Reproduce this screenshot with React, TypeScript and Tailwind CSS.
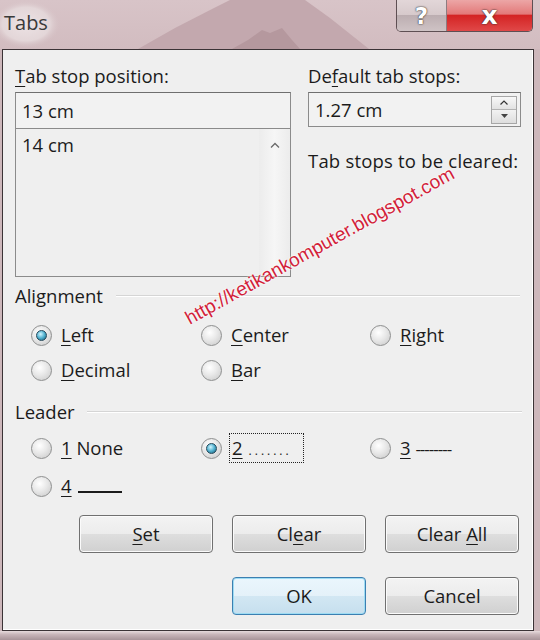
import React from "react";

function U({ children }: { children: React.ReactNode }) {
  return <span className="underline underline-offset-[3px] decoration-1">{children}</span>;
}

function Radio({ checked }: { checked?: boolean }) {
  return (
    <span className="w-[21px] h-[21px] shrink-0 rounded-full border border-[#8e8f8f] bg-[radial-gradient(circle_at_40%_35%,#ffffff,#e8e8e8_45%,#c6c6c6)] flex items-center justify-center">
      {checked && (
        <span className="w-[11px] h-[11px] rounded-full border border-[#24485a] bg-[radial-gradient(circle_at_40%_35%,#d2f6ff,#4fb0cf_50%,#17566e)]" />
      )}
    </span>
  );
}

function Opt({ checked, children }: { checked?: boolean; children: React.ReactNode }) {
  return (
    <div className="flex items-center gap-[9px] h-[22px]">
      <Radio checked={checked} />
      <span className="leading-[22px] whitespace-nowrap">{children}</span>
    </div>
  );
}

function Btn({ children, def }: { children: React.ReactNode; def?: boolean }) {
  return (
    <div
      className={
        def
          ? "w-[134px] h-[38px] rounded-[4px] border border-[#3c7fb1] bg-[linear-gradient(#eaf6fd,#e4f1f9_50%,#d2e7f3_50%,#c6dfee)] shadow-[inset_0_0_0_1px_#9edcf3] flex items-center justify-center"
          : "w-[134px] h-[38px] rounded-[4px] border border-[#707070] bg-[linear-gradient(#f3f3f3,#ececec_50%,#dedede_50%,#d0d0d0)] shadow-[inset_0_0_0_1px_#fbfbfb] flex items-center justify-center"
      }
    >
      <span className="leading-[22px]">{children}</span>
    </div>
  );
}

export default function App() {
  return (
    <div
      className="w-[540px] h-[640px] bg-[#cdb7bb] relative overflow-hidden text-[18.5px] text-[#1b1b1b]"
      style={{ fontFamily: '"Open Sans", "Noto Sans", sans-serif' }}
    >
      {/* title bar */}
      <div className="h-[49px] relative flex items-start bg-[linear-gradient(#d8c4c8,#d2bcc0)]">
        <svg className="absolute left-0 top-0" width="540" height="49" viewBox="0 0 540 49">
          <defs>
            <radialGradient id="glow" cx="0.5" cy="0.5" r="0.5">
              <stop offset="0" stopColor="#ece2e4" />
              <stop offset="0.7" stopColor="#e3d6d8" />
              <stop offset="1" stopColor="#d6c2c6" stopOpacity="0" />
            </radialGradient>
          </defs>
          <ellipse cx="26" cy="24" rx="34" ry="24" fill="url(#glow)" />
          <polygon points="138,49 175,28 214,8 230,0 305,0 330,18 369,49" fill="#c3a8ae" />
          <polygon points="232,49 248,40 262,30 270,33 282,28 292,40 300,49" fill="#b5989e" />
        </svg>
        <div className="relative pl-[4px] pt-[9px] text-[20px] leading-[28px] text-[#3a3a3a]">Tabs</div>
        <div className="relative ml-auto mr-[7px] flex h-[32px] rounded-b-[5px] border border-t-0 border-[#5e4f53] overflow-hidden">
          <div className="w-[50px] h-full bg-[linear-gradient(#e2d6d8,#d6c9cb_50%,#bcaeb1_50%,#cfc3c5)] flex items-center justify-center border-r border-[#8d7c80]">
            <span
              className="text-[23px] font-bold text-white leading-[28px] [text-shadow:0_0_2px_#333,0_0_1px_#333]"
              style={{ fontFamily: '"DejaVu Sans", sans-serif' }}
            >
              ?
            </span>
          </div>
          <div className="w-[85px] h-full bg-[linear-gradient(#eca6a6,#e37a7a_45%,#d42424_50%,#e04848)] flex items-center justify-center">
            <span
              className="text-[25px] font-bold text-white leading-[28px] [text-shadow:0_0_2px_#333,0_0_1px_#333]"
              style={{ fontFamily: '"DejaVu Sans", sans-serif' }}
            >
              x
            </span>
          </div>
        </div>
      </div>

      {/* panel */}
      <div className="ml-[2px] w-[532px] h-[582px] border border-[#3b3336] bg-[#efefef] shadow-[inset_-1px_-1px_0_#ffffff] flex flex-col">
        {/* top section */}
        <div className="flex pt-[15px]">
          <div className="ml-[12px] w-[276px] flex flex-col">
            <div className="h-[22px] leading-[22px] whitespace-nowrap">
              <U>T</U>ab stop position:
            </div>
            <div className="mt-[5px] h-[37px] border border-[#8b8b8b] border-t-[#6f6f6f] bg-[#f2f2f2] flex items-center pl-[6px]">
              <span className="leading-[22px]">13 cm</span>
            </div>
            <div className="h-[149px] -mt-px border border-[#8b8b8b] bg-[#efefef] flex">
              <div className="flex-1 pl-[6px] pt-[5px] leading-[22px]">14 cm</div>
              <div className="w-[31px] bg-[linear-gradient(90deg,#ececec,#f6f6f6,#ececec)] flex justify-center pt-[13px]">
                <svg width="10" height="6" viewBox="0 0 10 6">
                  <path d="M1 5.5 L5 1.5 L9 5.5" fill="none" stroke="#6a6a6a" strokeWidth="1.3" />
                </svg>
              </div>
            </div>
          </div>
          <div className="ml-[17px] w-[213px] flex flex-col">
            <div className="h-[22px] leading-[22px] whitespace-nowrap">
              De<U>f</U>ault tab stops:
            </div>
            <div className="mt-[5px] h-[35px] border border-[#8b8b8b] border-t-[#6f6f6f] bg-[#f2f2f2] flex items-center pl-[6px] pr-[3px]">
              <span className="flex-1 leading-[22px]">1.27 cm</span>
              <div className="w-[26px] h-[28px] flex flex-col border border-[#a7a7a7]">
                <div className="flex-1 bg-[linear-gradient(#f8f8f8,#e2e2e2)] border-b border-[#b3b3b3] flex items-center justify-center">
                  <svg width="8" height="5" viewBox="0 0 8 5">
                    <path d="M0.5 4.5 L4 1 L7.5 4.5" fill="none" stroke="#333" strokeWidth="1.2" />
                  </svg>
                </div>
                <div className="flex-1 bg-[linear-gradient(#f2f2f2,#dedede)] flex items-center justify-center">
                  <svg width="7" height="4" viewBox="0 0 7 4">
                    <path d="M0 0 L7 0 L3.5 4 Z" fill="#444" />
                  </svg>
                </div>
              </div>
            </div>
            <div className="mt-[23px] h-[22px] leading-[22px] whitespace-nowrap tracking-[0.2px]">Tab stops to be cleared:</div>
          </div>
        </div>

        {/* Alignment */}
        <div className="mt-[8px] ml-[12px] mr-[13px] h-[22px] flex items-center">
          <span className="leading-[22px]">Alignment</span>
          <div className="flex-1 ml-[13px] h-[2px] border-t border-[#d5d5d5] border-b border-b-white" />
        </div>
        <div className="mt-[17px] pl-[28px] grid grid-cols-[170px_169px_1fr] gap-y-[13px]">
          <Opt checked>
            <U>L</U>eft
          </Opt>
          <Opt>
            <U>C</U>enter
          </Opt>
          <Opt>
            <U>R</U>ight
          </Opt>
          <Opt>
            <U>D</U>ecimal
          </Opt>
          <Opt>
            <U>B</U>ar
          </Opt>
        </div>

        {/* Leader */}
        <div className="mt-[20px] ml-[12px] mr-[11px] h-[22px] flex items-center">
          <span className="leading-[22px]">Leader</span>
          <div className="flex-1 ml-[12px] h-[2px] border-t border-[#d5d5d5] border-b border-b-white" />
        </div>
        <div className="mt-[14px] pl-[28px] grid grid-cols-[170px_169px_1fr] gap-y-[16px]">
          <Opt>
            <U>1</U> None
          </Opt>
          <div className="flex items-center gap-[7px] h-[22px]">
            <Radio checked />
            <span className="-my-[4px] h-[30px] w-[75px] border border-dotted border-[#222] pl-[2px] flex items-center leading-[22px]">
              <U>2</U>
              <span className="ml-[6px] tracking-[3px] text-[12px] leading-none mt-[6px]">.......</span>
            </span>
          </div>
          <Opt>
            <U>3</U> <span className="tracking-[-1px] text-[17px]">--------</span>
          </Opt>
          <Opt>
            <span className="inline-flex items-end">
              <U>4</U>
              <span className="ml-[6px] mb-[4px] inline-block w-[44px] h-[2px] bg-[#1b1b1b]" />
            </span>
          </Opt>
        </div>

        {/* buttons */}
        <div className="mt-[18px] pr-[14px] flex justify-end gap-[19px]">
          <Btn>
            <U>S</U>et
          </Btn>
          <Btn>
            Cl<U>e</U>ar
          </Btn>
          <Btn>
            Clear <U>A</U>ll
          </Btn>
        </div>
        <div className="mt-[24px] pr-[14px] flex justify-end gap-[19px]">
          <Btn def>OK</Btn>
          <Btn>Cancel</Btn>
        </div>
      </div>
      <div className="h-[9px] bg-[linear-gradient(#e6dadc,#c7b4b8_40%,#a89499)]" />

      {/* watermark overlay */}
      <div
        className="absolute left-[140px] top-[232px] w-[360px] text-center text-[19px] text-[#d21f3a] whitespace-nowrap -rotate-[29deg] [text-shadow:0_0_2px_#ffffff,0_0_2px_#ffffff]"
        style={{ fontFamily: '"Liberation Sans", sans-serif' }}
      >
        http://ketikankomputer.blogspot.com
      </div>
    </div>
  );
}
